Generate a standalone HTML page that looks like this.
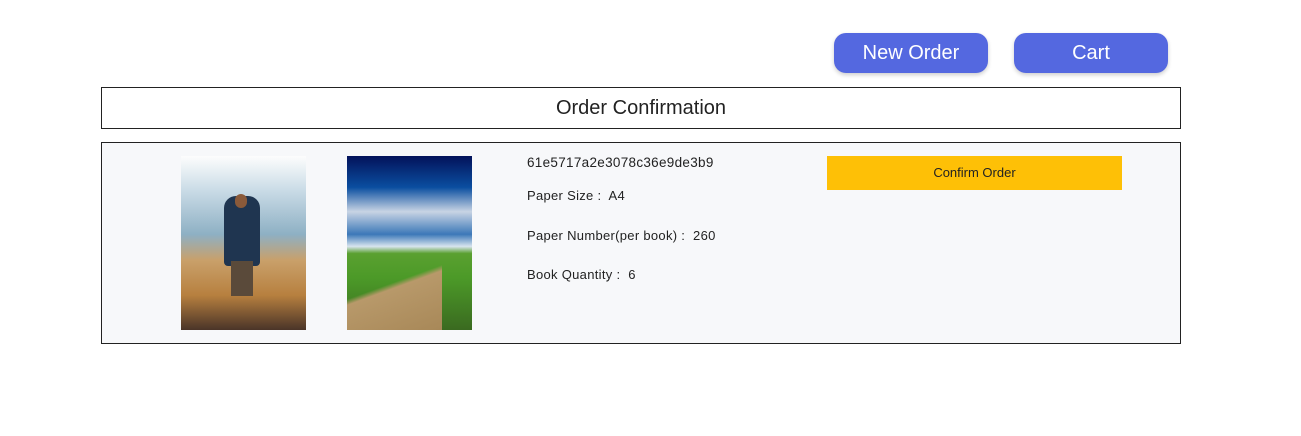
<!DOCTYPE html>
<html><head><style>
body{margin:0;width:1301px;height:436px;background:#fff;font-family:"Liberation Sans",sans-serif;position:relative;overflow:hidden}
.b{position:absolute;top:33px;width:154px;height:40px;border-radius:12px;background:#5468e0;color:#fff;font-size:20px;text-align:center;line-height:40px;box-shadow:0 2px 4px rgba(0,0,0,.2)}
.hd{position:absolute;left:101px;top:87px;width:1078px;height:40px;border:1px solid #222;text-align:center;line-height:40px;font-size:20px;color:#222}
.card{position:absolute;left:101px;top:142px;width:1078px;height:200px;border:1px solid #222;background:#f7f8fa}
.t{position:absolute;left:527px;font-size:13px;color:#222;letter-spacing:0.3px}
</style></head><body>
<div class="b" style="left:834px">New Order</div>
<div class="b" style="left:1014px">Cart</div>
<div class="hd">Order Confirmation</div>
<div class="card"></div>
<div style="position:absolute;left:181px;top:156px;width:125px;height:174px;background:linear-gradient(#fdfdfd 0%,#c9dbe6 20%,#8eb0c4 45%,#c9a06a 60%,#b7803f 80%,#4a3428 100%)">
<div style="position:absolute;left:43px;top:40px;width:36px;height:70px;background:#1f3550;border-radius:12px 12px 4px 4px"></div>
<div style="position:absolute;left:54px;top:38px;width:12px;height:14px;background:#8a5a3a;border-radius:6px"></div>
<div style="position:absolute;left:50px;top:105px;width:22px;height:35px;background:#5a4a3a"></div></div>
<div style="position:absolute;left:347px;top:156px;width:125px;height:174px;background:linear-gradient(#03125a 0%,#0a4ea0 18%,#c8d4e4 32%,#3c78b8 45%,#d8e4ee 52%,#5aa030 56%,#4c9a28 70%,#3a6a20 100%)">
<div style="position:absolute;left:0;top:90px;width:95px;height:84px;background:linear-gradient(160deg,transparent 45%,#b8996a 50%,#a88858 100%)"></div></div>
<div class="t" style="top:155px;font-size:13.5px">61e5717a2e3078c36e9de3b9</div>
<div class="t" style="top:188px">Paper Size :&nbsp; A4</div>
<div class="t" style="top:228px">Paper Number(per book) :&nbsp; 260</div>
<div class="t" style="top:267px">Book Quantity :&nbsp; 6</div>
<div style="position:absolute;left:827px;top:156px;width:295px;height:34px;background:#fec006;text-align:center;line-height:34px;font-size:13px;color:#222">Confirm Order</div>
</body></html>
